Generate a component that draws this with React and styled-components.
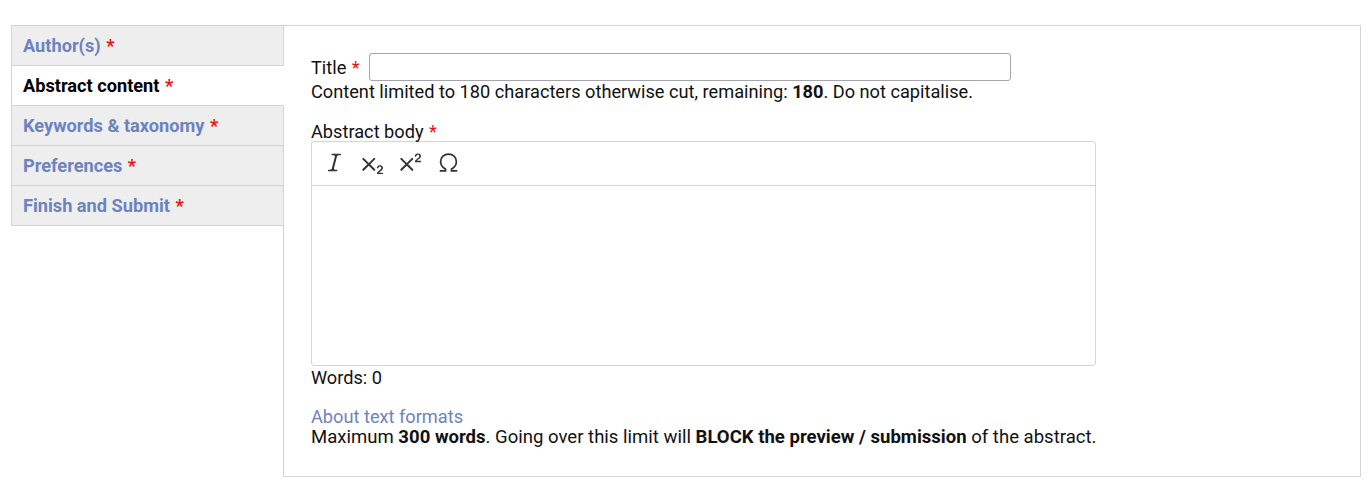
import React from 'react';
import styled, { createGlobalStyle } from 'styled-components';

const Global = createGlobalStyle`
  html, body { margin: 0; padding: 0; background: #fff; }
  body { font-family: Roboto, "Liberation Sans", sans-serif; font-size: 18.2px; line-height: 21px; color: #111; }
`;
const Page = styled.div`
  display: flex;
  align-items: flex-start;
  padding: 25px 6px 13px 11px;
`;
const Tabs = styled.ul`
  list-style: none;
  margin: 0 -1px 0 0;
  padding: 0;
  width: 273px;
  flex: none;
  position: relative;
  z-index: 1;
`;
const Tab = styled.li`
  box-sizing: border-box;
  height: ${p => (p.$first ? '41px' : '40px')};
  padding: 9px 11px 0;
  font-weight: 700;
  color: ${p => (p.$active ? '#000' : '#6c83c0')};
  background: ${p => (p.$active ? '#fff' : '#eeeeee')};
  border: 1px solid #d4d4d4;
  border-top-width: ${p => (p.$first ? '1px' : '0')};
  border-right-color: ${p => (p.$active ? '#fff' : '#d4d4d4')};
`;
const Req = styled.span`
  color: #f01010;
  font-weight: ${p => (p.$light ? 400 : 700)};
  margin-left: 1px;
`;
const Panel = styled.main`
  box-sizing: border-box;
  flex: 1;
  height: 452px;
  border: 1px solid #d4d4d4;
  padding: 27px 27px 0;
`;
const TitleRow = styled.div`
  display: flex;
  align-items: center;
  gap: 9px;
  height: 28px;
`;
const TitleInput = styled.input`
  box-sizing: border-box;
  width: 642px;
  height: 28px;
  border: 1px solid #a4a4b0;
  border-radius: 3px;
  background: #fff;
  padding: 0 4px;
`;
const Plain = styled.div`
  height: 21px;
`;
const WordCount = styled(Plain)`
  box-sizing: border-box;
  padding-top: 1px;
`;
const Notice = styled(Plain)`
  font-size: 18.56px;
  white-space: nowrap;
`;
const BodyLabel = styled.div`
  height: 20px;
  margin-top: 19px;
`;
const Editor = styled.div`
  box-sizing: border-box;
  width: 785px;
  height: 225px;
  border: 1px solid #d4d4d4;
  border-radius: 3px;
`;
const Toolbar = styled.div`
  box-sizing: border-box;
  display: flex;
  align-items: center;
  height: 44px;
  padding: 0 0 3px 3px;
  border-bottom: 1px solid #d4d4d4;
`;
const ToolIcon = styled.svg`
  display: block;
  width: 25px;
  height: 25px;
  margin: 0 6.5px;
  fill: #333;
`;
const HelpLink = styled.a`
  display: block;
  margin-top: 19px;
  height: 21px;
  color: #6c83c0;
  text-decoration: none;
`;

const two = "h2.549c.254 0 .447.05.58.152a.49.49 0 0 1 .201.413.54.54 0 0 1-.159.393c-.105.108-.266.162-.48.162h-3.594c-.245 0-.435-.066-.572-.197a.621.621 0 0 1-.205-.463c0-.114.044-.265.132-.453a1.62 1.62 0 0 1 .288-.444c.433-.436.824-.81 1.172-1.122.348-.312.597-.517.747-.615.267-.183.49-.368.667-.553.177-.185.312-.375.405-.57.093-.194.139-.384.139-.57a1.008 1.008 0 0 0-.554-.917 1.197 1.197 0 0 0-.56-.133c-.426 0-.761.182-1.005.546a2.332 2.332 0 0 0-.164.39 1.609 1.609 0 0 1-.258.488c-.096.114-.237.17-.423.17a.558.558 0 0 1-.405-.156.568.568 0 0 1-.161-.427c0-.218.05-.446.151-.683.101-.238.252-.453.452-.646s.454-.349.762-.467a2.998 2.998 0 0 1 1.081-.178c.498 0 .923.076 1.274.228a1.916 1.916 0 0 1 1.004 1.032 1.984 1.984 0 0 1-.156 1.794c-.2.32-.405.572-.613.754-.208.182-.558.468-1.048.857-.49.39-.826.691-1.008.906a2.703 2.703 0 0 0-.24.309z";
const cross = "m7.03 10.349 3.818-3.819a.8.8 0 1 1 1.132 1.132L8.16 11.48l3.819 3.818a.8.8 0 1 1-1.132 1.132L7.03 12.61l-3.818 3.82a.8.8 0 1 1-1.132-1.132L5.9 11.48 2.08 7.662A.8.8 0 1 1 3.212 6.53l3.818 3.82z";

const Italic = () => (
  <ToolIcon viewBox="0 0 20 20">
    <path d="m9.586 14.633.021.004c-.036.335.095.655.393.962.082.083.173.15.274.201h1.474a.6.6 0 1 1 0 1.2H5.304a.6.6 0 0 1 0-1.2h1.15c.474-.07.809-.182 1.005-.334.157-.122.291-.32.404-.597l2.416-9.55a1.053 1.053 0 0 0-.281-.823 1.12 1.12 0 0 0-.442-.296H8.15a.6.6 0 0 1 0-1.2h6.443a.6.6 0 1 1 0 1.2h-1.195c-.376.056-.65.155-.823.296-.215.175-.423.439-.623.79l-2.366 9.347z" />
  </ToolIcon>
);
const Subscript = () => (
  <ToolIcon viewBox="0 0 20 20">
    <path d={cross} />
    <path d={`M15.177 18.178${two}`} />
  </ToolIcon>
);
const Superscript = () => (
  <ToolIcon viewBox="0 0 20 20">
    <path d={cross} />
    <path d={`M15.177 8.678${two}`} />
  </ToolIcon>
);
const Omega = () => (
  <ToolIcon viewBox="0 0 20 20">
    <path d="M3 16.6h4.6v-1.3C5.4 14.1 3.7 12 3.7 9.4c0-3.6 2.8-6.2 6.3-6.2s6.3 2.6 6.3 6.2c0 2.6-1.7 4.7-3.9 5.9v1.3H17" fill="none" stroke="#333" strokeWidth="1.4" />
  </ToolIcon>
);

const items = ['Author(s)', 'Abstract content', 'Keywords & taxonomy', 'Preferences', 'Finish and Submit'];

export default function App() {
  return (
    <Page>
      <Global />
      <Tabs>
        {items.map((t, i) => (
          <Tab key={t} $first={i === 0} $active={i === 1}>
            {t} <Req>*</Req>
          </Tab>
        ))}
      </Tabs>
      <Panel>
        <TitleRow>
          <span>Title <Req $light>*</Req></span>
          <TitleInput type="text" />
        </TitleRow>
        <Plain>Content limited to 180 characters otherwise cut, remaining: <b>180</b>. Do not capitalise.</Plain>
        <BodyLabel>Abstract body <Req $light>*</Req></BodyLabel>
        <Editor>
          <Toolbar>
            <Italic />
            <Subscript />
            <Superscript />
            <Omega />
          </Toolbar>
        </Editor>
        <WordCount>Words: 0</WordCount>
        <HelpLink href="#">About text formats</HelpLink>
        <Notice>Maximum <b>300 words</b>. Going over this limit will <b>BLOCK the preview / submission</b> of the abstract.</Notice>
      </Panel>
    </Page>
  );
}
